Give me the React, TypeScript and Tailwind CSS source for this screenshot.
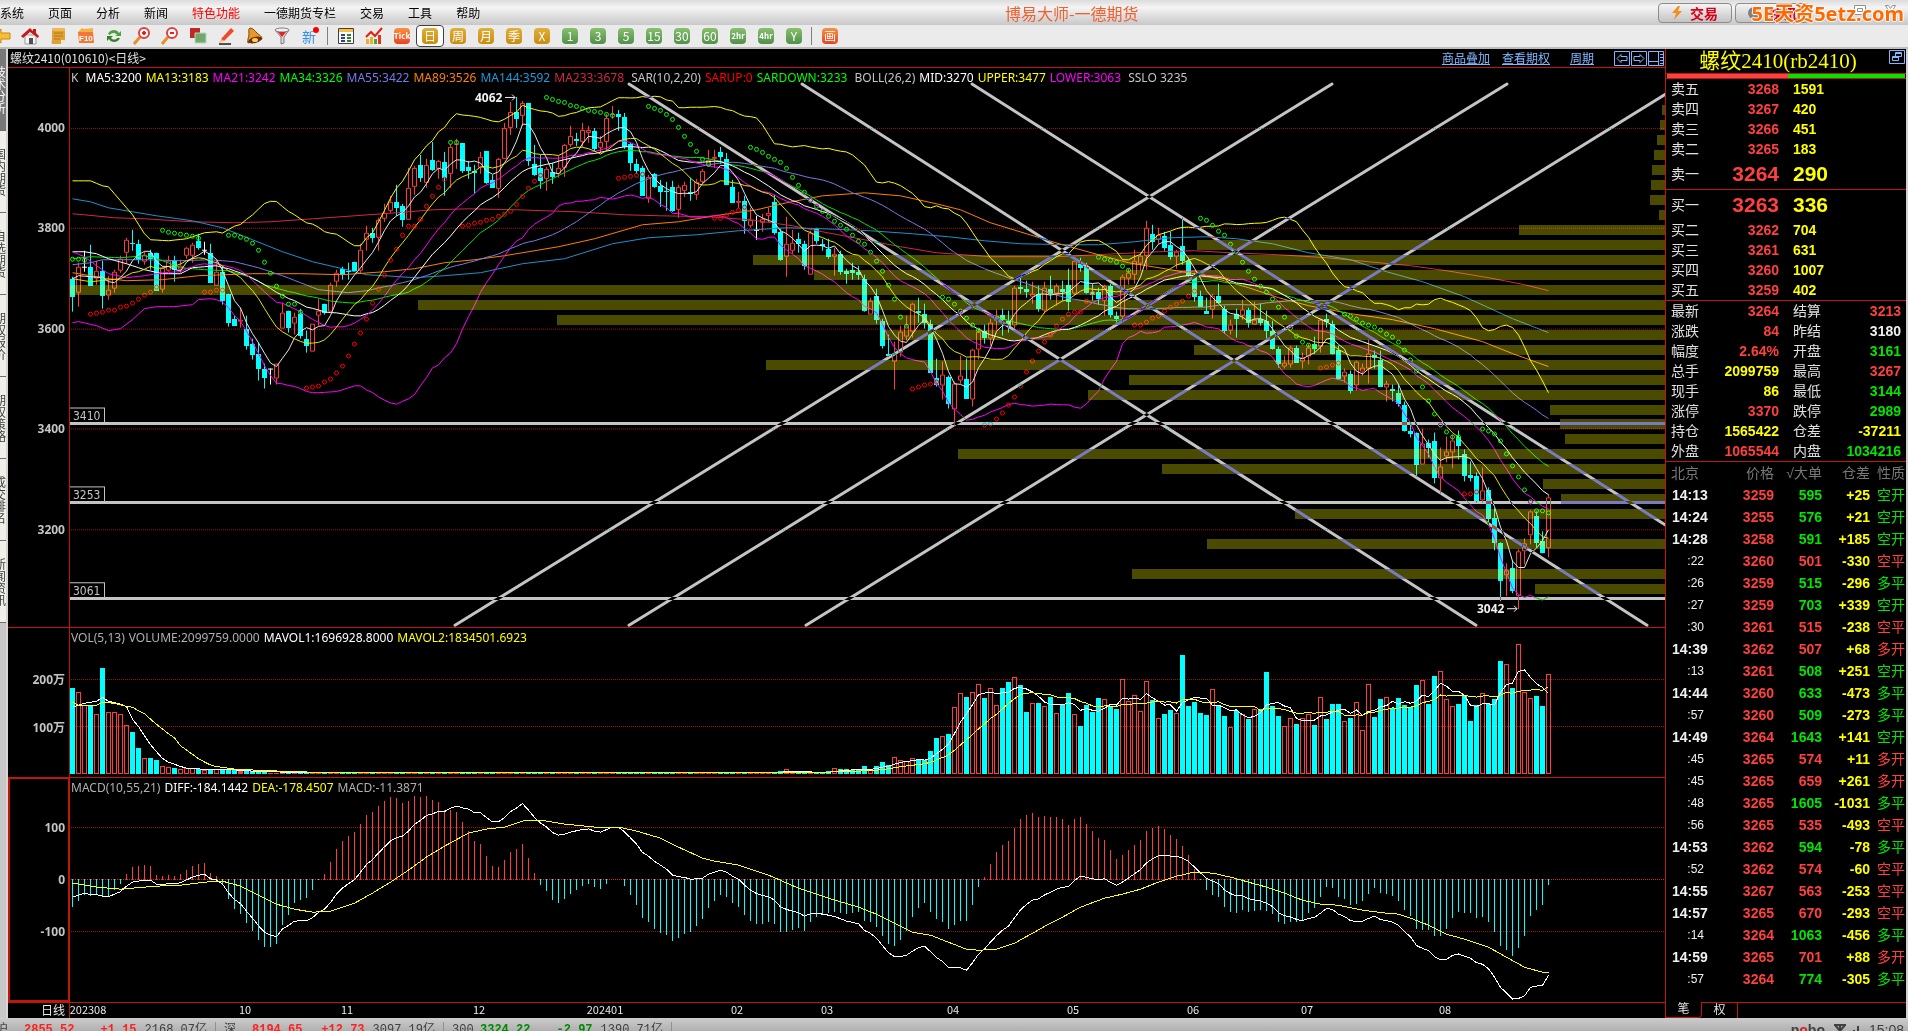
import type { ReactNode } from 'react';

// All series are kept in canvas units: x = 72.5 + 6 * bar, y grows downwards.
const barX = (i: number) => 72.5 + i * 6;

type Point = [number, number];

// open, close, high, low
const CANDLES: number[][] = [
  [279, 297, 277, 312], [293, 267, 263, 307], [267, 267, 251, 272], [267, 286, 245, 286], [279, 271, 261, 285],
  [271, 296, 261, 309], [296, 290, 276, 300], [289, 272, 270, 293], [271, 259, 256, 273], [253, 240, 238, 264],
  [243, 244, 230, 251], [244, 260, 240, 264], [262, 255, 252, 265], [253, 259, 250, 270], [253, 291, 253, 291],
  [290, 268, 267, 293], [271, 261, 256, 272], [261, 270, 256, 282], [270, 266, 260, 273], [256, 248, 247, 259],
  [256, 245, 243, 263], [241, 248, 234, 250], [250, 250, 242, 255], [253, 283, 244, 283], [286, 272, 261, 286],
  [272, 301, 266, 305], [294, 323, 294, 327], [319, 326, 316, 326], [322, 320, 308, 328], [329, 346, 316, 350],
  [344, 355, 339, 360], [354, 369, 343, 381], [369, 378, 364, 389], [369, 369, 369, 385], [379, 364, 364, 385],
  [329, 313, 303, 329], [311, 328, 311, 333], [324, 317, 313, 335], [314, 336, 309, 339], [339, 346, 331, 353],
  [352, 324, 324, 352], [316, 311, 299, 326], [304, 313, 304, 315], [312, 285, 283, 312], [282, 273, 270, 287],
  [269, 275, 267, 280], [271, 272, 263, 280], [262, 271, 262, 272], [271, 250, 244, 274], [240, 233, 226, 251],
  [233, 238, 228, 243], [238, 220, 218, 251], [219, 213, 204, 222], [211, 202, 196, 213], [202, 208, 185, 216],
  [206, 220, 204, 227], [220, 188, 168, 220], [187, 168, 166, 195], [165, 178, 155, 182], [183, 165, 159, 188],
  [160, 170, 142, 171], [169, 161, 160, 179], [162, 178, 152, 196], [174, 147, 144, 188], [145, 144, 139, 169],
  [143, 171, 143, 173], [167, 171, 161, 179], [171, 173, 165, 194], [168, 157, 152, 174], [151, 183, 151, 184],
  [180, 188, 175, 188], [189, 159, 158, 198], [159, 128, 123, 159], [128, 112, 102, 135], [112, 119, 97, 128],
  [116, 103, 101, 126], [103, 161, 103, 166], [164, 175, 145, 176], [168, 181, 155, 189], [179, 169, 167, 191],
  [172, 177, 163, 184], [174, 168, 156, 178], [168, 145, 144, 177], [145, 136, 126, 147], [139, 141, 133, 146],
  [142, 130, 123, 147], [133, 130, 126, 143], [131, 149, 128, 152], [148, 142, 136, 153], [142, 118, 114, 151],
  [115, 114, 106, 119], [114, 117, 110, 131], [117, 147, 113, 149], [144, 163, 143, 171], [164, 171, 159, 174],
  [168, 196, 166, 196], [199, 177, 175, 203], [174, 187, 173, 188], [186, 192, 180, 207], [191, 192, 182, 211],
  [187, 211, 181, 212], [210, 187, 185, 218], [191, 185, 182, 197], [192, 194, 178, 201], [195, 182, 179, 200],
  [182, 171, 169, 184], [166, 160, 150, 167], [159, 157, 150, 168], [152, 157, 147, 164], [159, 185, 153, 185],
  [187, 203, 180, 203], [203, 201, 192, 208], [201, 221, 196, 234], [226, 220, 208, 228], [230, 230, 216, 240],
  [223, 219, 214, 232], [216, 213, 208, 223], [202, 233, 195, 235], [232, 260, 229, 261], [257, 244, 217, 277],
  [251, 243, 230, 254], [239, 244, 233, 253], [244, 266, 241, 270], [275, 233, 231, 275], [229, 241, 228, 244],
  [244, 246, 239, 251], [249, 257, 239, 259], [257, 254, 248, 276], [254, 272, 251, 275], [271, 274, 269, 284],
  [270, 273, 263, 280], [272, 275, 266, 280], [279, 311, 275, 312], [315, 301, 298, 315], [296, 320, 289, 324],
  [321, 346, 319, 349], [354, 356, 335, 357], [362, 354, 342, 390], [353, 332, 326, 357], [337, 326, 316, 341],
  [332, 304, 303, 338], [311, 313, 298, 323], [314, 323, 304, 329], [324, 373, 320, 373], [378, 385, 359, 387],
  [386, 375, 362, 400], [377, 404, 376, 409], [410, 384, 382, 427], [381, 376, 356, 384], [379, 399, 359, 399],
  [400, 350, 349, 407], [350, 332, 329, 360], [331, 338, 325, 344], [339, 323, 319, 346], [321, 316, 310, 330],
  [315, 320, 309, 336], [321, 326, 311, 333], [326, 288, 286, 329], [287, 289, 278, 294], [289, 292, 281, 298],
  [297, 294, 282, 304], [294, 309, 286, 312], [311, 288, 282, 314], [289, 294, 276, 300], [294, 286, 284, 306],
  [289, 292, 281, 301], [285, 302, 269, 311], [294, 261, 260, 296], [264, 268, 258, 272], [267, 293, 263, 294],
  [292, 295, 284, 301], [292, 299, 288, 305], [301, 286, 285, 316], [286, 315, 284, 318], [316, 319, 312, 323],
  [317, 277, 275, 322], [279, 273, 269, 285], [275, 261, 250, 284], [264, 256, 253, 271], [256, 228, 221, 270],
  [234, 242, 225, 250], [240, 235, 228, 244], [236, 248, 232, 251], [245, 257, 232, 260], [257, 252, 250, 269],
  [246, 261, 218, 265], [261, 276, 258, 277], [275, 297, 273, 302], [296, 307, 291, 307], [311, 314, 298, 314],
  [310, 296, 294, 319], [296, 303, 284, 304], [309, 331, 306, 334], [331, 325, 320, 335], [314, 319, 309, 338],
  [316, 310, 300, 320], [310, 323, 308, 328], [325, 320, 302, 325], [319, 323, 304, 326], [321, 331, 311, 339],
  [331, 349, 321, 350], [349, 364, 347, 368], [367, 363, 356, 369], [365, 348, 346, 368], [348, 363, 346, 363],
  [362, 358, 353, 369], [357, 348, 344, 365], [344, 349, 337, 354], [347, 320, 319, 353], [319, 322, 314, 328],
  [324, 354, 321, 355], [350, 379, 346, 380], [377, 372, 369, 383], [374, 391, 371, 394], [386, 362, 361, 391],
  [372, 368, 364, 376], [369, 354, 340, 384], [355, 358, 351, 369], [360, 387, 351, 387], [388, 384, 381, 402],
  [389, 391, 385, 402], [393, 404, 385, 407], [405, 432, 402, 432], [432, 435, 425, 438], [434, 466, 433, 477],
  [465, 444, 429, 465], [444, 449, 440, 458], [442, 479, 433, 484], [479, 467, 448, 494], [457, 452, 437, 463],
  [453, 441, 435, 469], [438, 447, 431, 460], [455, 477, 450, 482], [476, 479, 462, 482], [477, 502, 473, 503],
  [501, 491, 468, 503], [491, 520, 488, 526], [519, 544, 509, 551], [544, 582, 543, 602], [576, 571, 564, 597],
  [569, 592, 561, 594], [597, 552, 550, 610], [552, 544, 539, 565], [536, 512, 511, 545], [517, 544, 512, 548],
  [542, 554, 532, 554], [549, 498, 495, 558],
];

// tops of the first and last volume bars, the ones between are near zero
const VOL_HEAD = [
  689, 693, 706, 707, 715, 669, 713, 713, 715, 726, 733, 749, 759, 759, 761, 767, 768, 769, 770, 769, 769, 770, 771,
  770, 770, 770, 771, 771, 772, 772, 772, 772, 772,
];
const VOL_TAIL = [
  772, 770, 773, 773, 773, 773, 773, 773, 772, 769, 770, 770, 771, 771, 767, 770, 767, 763, 766, 758, 761, 762, 759,
  760, 761, 752, 739, 737, 735, 708, 694, 698, 693, 685, 699, 689, 706, 689, 683, 678, 686, 713, 704, 704, 707, 698,
  714, 705, 694, 715, 727, 706, 713, 699, 700, 707, 710, 680, 702, 696, 712, 682, 701, 719, 715, 711, 714, 656, 707,
  703, 714, 716, 690, 706, 717, 728, 712, 715, 720, 710, 710, 673, 707, 717, 727, 719, 725, 719, 715, 726, 698, 720,
  705, 705, 722, 719, 703, 731, 685, 718, 700, 698, 709, 699, 706, 708, 686, 681, 705, 677, 672, 700, 707, 705, 696,
  722, 706, 694, 705, 700, 662, 665, 689, 645, 693, 699, 697, 707, 675,
];
const VOLUME = [
  ...VOL_HEAD,
  ...Array<number>(CANDLES.length - VOL_HEAD.length - VOL_TAIL.length).fill(773),
  ...VOL_TAIL,
];

const MACD_BARS = [
  -28, -22, -16, -17, -15, -17, -17, -11, -5, 5, 12, 13, 14, 13, 4, 3, 4, 3, 5, 9, 13, 15, 16, 6, 3, -6, -20, -30, -35,
  -44, -52, -61, -68, -68, -65, -46, -36, -24, -21, -19, -11, -1, 5, 17, 30, 38, 43, 47, 55, 64, 67, 73, 78, 82, 81,
  76, 78, 83, 82, 83, 79, 77, 69, 69, 67, 57, 48, 38, 35, 23, 13, 12, 19, 27, 30, 35, 21, 6, -6, -12, -21, -24, -20,
  -15, -11, -7, -5, -8, -10, -5, 0, 0, -7, -16, -26, -39, -43, -50, -54, -56, -62, -59, -55, -53, -47, -40, -29, -22,
  -16, -18, -24, -28, -36, -42, -45, -45, -43, -45, -53, -53, -51, -49, -52, -43, -38, -36, -34, -33, -34, -35, -34,
  -33, -42, -43, -48, -57, -65, -67, -61, -52, -38, -29, -24, -33, -40, -43, -50, -46, -42, -42, -26, -8, 2, 15, 27,
  34, 38, 51, 60, 64, 66, 62, 63, 62, 62, 60, 54, 60, 62, 55, 48, 41, 39, 29, 20, 24, 29, 34, 39, 48, 51, 53, 50, 44,
  40, 33, 24, 10, -1, -11, -16, -18, -28, -33, -34, -31, -33, -32, -31, -32, -35, -43, -45, -43, -43, -41, -34, -29,
  -18, -8, -9, -18, -20, -26, -25, -22, -15, -9, -14, -15, -17, -22, -31, -37, -50, -51, -51, -57, -57, -50, -39, -33,
  -34, -34, -39, -38, -43, -53, -67, -71, -77, -69, -57, -37, -31, -26, -6,
];

const DEA: Point[] = [
  [0, 883], [1, 884], [4, 887], [8, 889], [14, 886], [18, 885], [22, 882], [25, 881], [28, 886], [31, 895], [34, 904],
  [37, 909], [40, 912], [43, 911], [47, 903], [50, 893], [53, 882], [56, 870], [59, 857], [62, 846], [66, 833],
  [69, 829], [72, 827], [75, 821], [78, 820], [82, 824], [87, 827], [91, 827], [94, 831], [98, 838], [101, 847],
  [105, 858], [107, 861], [111, 865], [116, 875], [121, 888], [126, 898], [131, 907], [134, 914], [138, 926],
  [140, 932], [143, 935], [146, 942], [149, 949], [151, 950], [154, 949], [157, 943], [160, 933], [163, 923],
  [165, 917], [168, 907], [172, 898], [175, 894], [178, 889], [181, 882], [184, 876], [187, 872], [190, 873],
  [193, 877], [196, 882], [199, 887], [202, 893], [205, 900], [208, 904], [211, 905], [215, 910], [219, 913],
  [221, 914], [223, 918], [226, 925], [229, 934], [232, 939], [236, 947], [239, 957], [242, 967], [245, 972],
  [246, 972],
];

const MA89: Point[] = [
  [0, 273], [6, 279], [9, 281], [15, 280], [21, 276], [30, 274], [38, 274], [45, 275], [52, 272], [57, 269],
  [62, 263], [67, 260], [72, 256], [81, 247], [87, 239], [95, 225], [101, 222], [107, 216], [114, 210], [119, 203],
  [125, 196], [132, 193], [138, 196], [144, 204], [148, 210], [153, 223], [159, 234], [165, 245], [171, 255],
  [176, 263], [184, 271], [189, 276], [196, 288], [201, 298], [206, 306], [213, 314], [220, 320], [227, 329],
  [235, 342], [240, 354], [246, 367],
];
const MA144: Point[] = [
  [0, 199], [3, 202], [6, 208], [10, 212], [14, 216], [20, 221], [25, 228], [30, 240], [35, 252], [40, 262],
  [45, 269], [49, 275], [52, 276], [57, 278], [62, 276], [68, 273], [75, 264], [82, 259], [90, 244], [96, 238],
  [104, 235], [111, 231], [119, 228], [125, 229], [133, 231], [140, 234], [146, 237], [152, 241], [158, 244],
  [166, 245], [171, 245], [177, 242], [183, 238], [189, 237], [194, 239], [200, 244], [206, 253], [213, 260],
  [219, 272], [225, 282], [232, 297], [240, 319], [246, 333],
];
const MA233: Point[] = [
  [0, 214], [2, 215], [7, 218], [12, 219], [20, 222], [27, 223], [33, 222], [40, 219], [47, 216], [54, 213],
  [60, 210], [66, 209], [74, 210], [84, 212], [92, 215], [98, 216], [106, 217], [113, 220], [120, 226], [125, 232],
  [132, 240], [138, 247], [144, 253], [153, 257], [164, 257], [174, 254], [181, 252], [187, 251], [193, 253],
  [201, 255], [209, 258], [216, 262], [223, 266], [229, 271], [236, 278], [242, 285], [246, 291],
];

// Values before the averaging window is full
const HEADS: Record<string, Point[]> = {
  ma5: [[0, 279], [1, 276], [3, 277]],
  ma13: [[0, 279], [3, 282], [8, 279], [10, 273], [12, 271]],
  ma21: [[0, 252], [2, 257], [4, 266], [6, 274], [9, 278], [12, 276], [15, 273], [18, 272], [20, 266]],
  ma34: [[0, 259], [3, 257], [8, 258], [12, 256], [15, 261], [18, 268], [22, 270], [26, 271], [30, 278], [33, 289]],
  ma55: [
    [0, 265], [3, 263], [5, 260], [12, 260], [18, 261], [23, 260], [27, 262], [31, 268], [35, 276], [38, 283],
    [41, 290], [46, 293], [49, 291], [52, 287], [54, 285],
  ],
  mid: [[0, 252], [2, 252], [4, 254], [6, 259], [9, 264], [12, 270], [15, 274], [18, 274], [20, 268], [24, 266]],
  upper: [
    [0, 181], [3, 181], [5, 186], [6, 187], [8, 201], [10, 215], [12, 234], [13, 240], [16, 241], [19, 239],
    [21, 235], [22, 233], [24, 232],
  ],
  lower: [
    [0, 323], [1, 322], [4, 326], [6, 331], [8, 329], [10, 320], [12, 309], [14, 307], [17, 307], [20, 305],
    [21, 300], [23, 299], [24, 300],
  ],
  vol5: [[0, 708], [1, 706], [2, 704], [3, 703]],
  vol13: [[0, 703], [1, 706], [4, 706], [5, 703], [7, 704], [9, 707], [10, 708], [12, 715]],
};

const SAR: { from: number; up?: boolean; y: number[] }[] = [
  { from: 0, y: [259, 259, 260] },
  { from: 3, up: true, y: [314, 313, 312, 310, 310, 307, 306, 303, 299, 295, 292, 287] },
  { from: 15, y: [230, 232, 233, 234, 235, 236, 238] },
  { from: 22, up: true, y: [292, 292, 290, 290] },
  { from: 26, y: [235, 235, 237, 239, 243, 250, 262, 273, 286, 296, 304, 304, 312] },
  {
    from: 39,
    up: true,
    y: [
      388, 387, 386, 382, 379, 373, 366, 356, 344, 333, 319, 303, 289, 275, 260, 249, 235, 226, 226, 219, 206, 196,
      187, 179,
    ],
  },
  { from: 63, y: [142, 142] },
  { from: 65, up: true, y: [226, 225, 223, 222, 220, 219, 216, 214, 211, 204, 196, 188, 181, 175] },
  { from: 79, y: [97, 99, 101, 102, 105, 106, 108, 110, 111, 112, 114, 115] },
  { from: 91, up: true, y: [178, 177, 176, 175, 174] },
  { from: 96, y: [106, 108, 110, 114, 119, 127, 136, 144, 151, 159, 164] },
  { from: 107, up: true, y: [218, 218, 215, 212, 210, 207] },
  {
    from: 113,
    y: [
      147, 149, 152, 156, 159, 162, 168, 177, 185, 192, 200, 206, 211, 216, 221, 225, 229, 235, 241, 244, 252, 261,
      271, 285, 299, 317, 326,
    ],
  },
  { from: 140, up: true, y: [389, 387, 385, 384, 382] },
  { from: 145, y: [297, 299, 304, 311, 318, 325, 330] },
  {
    from: 152,
    up: true,
    y: [425, 424, 419, 413, 405, 397, 386, 372, 361, 351, 342, 335, 326, 319, 314, 312, 312, 301, 293],
  },
  { from: 171, y: [257, 259, 260, 262, 266, 270] },
  { from: 177, up: true, y: [325, 325, 322, 318, 316, 311, 307, 304, 301, 296, 291] },
  {
    from: 188,
    y: [218, 220, 225, 231, 235, 244, 252, 262, 271, 279, 286, 292, 299, 307, 317, 328, 336, 342, 345, 347],
  },
  { from: 208, up: true, y: [368, 367, 365, 363] },
  {
    from: 212,
    y: [314, 316, 319, 323, 325, 327, 330, 334, 337, 342, 350, 360, 371, 387, 401, 414, 425, 432, 437, 437],
  },
  { from: 232, up: true, y: [494, 494, 492] },
  { from: 235, y: [429, 431, 434, 441, 454, 466, 477, 490, 502, 511, 511, 513] },
];

// left edge of each price-volume bucket, 15 units apart; 0 = empty
const PROFILE = [
  1662, 1660, 1657, 1654, 1652, 1651, 1650, 1659, 1519, 1197, 753, 814, 70, 418, 557, 882, 1194, 766, 1129, 1088,
  1550, 1560, 1565, 958, 1162, 1543, 1561, 1295, 0, 1207, 0, 1132, 1535,
];

const TREND_LINES = [
  [629, 84, 1476, 626],
  [802, 84, 1647, 626],
  [972, 84, 1666, 526],
  [455, 626, 1332, 84],
  [629, 626, 1507, 84],
  [806, 626, 1666, 94],
];

const LEVELS = [
  { y: 424, label: '3410' },
  { y: 503, label: '3253' },
  { y: 599, label: '3061' },
];

function at(points: Point[], i: number) {
  for (let k = 1; k < points.length; k++) {
    const [x0, y0] = points[k - 1];
    const [x1, y1] = points[k];
    if (i <= x1) return y0 + ((y1 - y0) * (i - x0)) / (x1 - x0);
  }
  return points[points.length - 1][1];
}

function average(values: number[], n: number, head: Point[]) {
  return values.map((_, i) => {
    if (i < n - 1) return at(head, i);
    return values.slice(i - n + 1, i + 1).reduce((a, b) => a + b, 0) / n;
  });
}

function band(values: number[], n: number, side: number, head: Point[]) {
  return values.map((_, i) => {
    if (i < n - 1) return at(head, i);
    const win = values.slice(i - n + 1, i + 1);
    const mean = win.reduce((a, b) => a + b, 0) / n;
    const dev = Math.sqrt(win.reduce((a, b) => a + (b - mean) ** 2, 0) / n);
    return mean + side * 2 * dev;
  });
}

const toPoints = (ys: number[]) => ys.map((y, i) => `${barX(i)},${y.toFixed(1)}`).join(' ');
const keyed = (points: Point[]) => points.map(([i, y]) => `${barX(i)},${y}`).join(' ');

const CLOSES = CANDLES.map((c) => c[1]);
const DEA_LINE = CANDLES.map((_, i) => at(DEA, i));
const DIFF_LINE = DEA_LINE.map((y, i) => y - MACD_BARS[i] / 2);

const PRICE_LINES = [
  { color: '#d02848', points: keyed(MA233) },
  { color: '#2090d0', points: keyed(MA144) },
  { color: '#ff8000', points: keyed(MA89) },
  { color: '#7878e8', points: toPoints(average(CLOSES, 55, HEADS.ma55)) },
  { color: '#00e600', points: toPoints(average(CLOSES, 34, HEADS.ma34)) },
  { color: '#ffffff', points: toPoints(average(CLOSES, 26, HEADS.mid)) },
  { color: '#ff00ff', points: toPoints(average(CLOSES, 21, HEADS.ma21)) },
  { color: '#e6e600', points: toPoints(average(CLOSES, 13, HEADS.ma13)) },
  { color: '#ffff00', points: toPoints(band(CLOSES, 26, -1, HEADS.upper)) },
  { color: '#ff00ff', points: toPoints(band(CLOSES, 26, 1, HEADS.lower)) },
  { color: '#e8e8e8', points: toPoints(average(CLOSES, 5, HEADS.ma5)) },
];

function Grid({ rows }: { rows: number[] }) {
  return (
    <>
      {rows.map((y) => (
        <line key={y} x1="71" x2="1665" y1={y} y2={y} stroke="#a01010" strokeDasharray="1 1" />
      ))}
    </>
  );
}

function PriceChart() {
  return (
    <svg
      className="block w-full h-full"
      viewBox="70 68 1595 560"
      preserveAspectRatio="none"
      shapeRendering="crispEdges"
      fill="none"
    >
      <Grid rows={[128.5, 228.5, 329.5, 429.5, 530.5]} />
      {CANDLES.map(([open, close, high, low], i) => {
        const x = barX(i);
        if (open === close) {
          return <path key={i} d={`M${x} ${high}V${low}M${x - 2.5} ${open + 0.5}h5`} stroke="#fff" />;
        }
        if (close > open) {
          return (
            <g key={i}>
              <path d={`M${x} ${high}V${low}`} stroke="#00ffff" />
              <rect x={x - 2.5} y={open} width="5" height={close - open} fill="#00ffff" />
            </g>
          );
        }
        return (
          <path
            key={i}
            d={`M${x} ${high}V${close}M${x} ${open}V${low}M${x - 2} ${close + 0.5}h4V${open - 0.5}h-4z`}
            stroke="#ff3c3c"
          />
        );
      })}
      {PRICE_LINES.map((l, i) => (
        <polyline key={i} points={l.points} stroke={l.color} />
      ))}
      <g shapeRendering="auto">
        {SAR.map((run) =>
          run.y.map((y, k) => (
            <circle
              key={`${run.from}-${k}`}
              cx={barX(run.from + k)}
              cy={y + 0.5}
              r="2"
              stroke={run.up ? '#ff0000' : '#00ff00'}
            />
          )),
        )}
      </g>
      {PROFILE.map((x, k) =>
        x ? <rect key={k} x={x} y={105 + k * 15} width={1665 - x} height="10" fill="#ffff00" opacity="0.29" /> : null,
      )}
      {LEVELS.map((l) => (
        <rect key={l.y} className="mix-blend-difference" x="70" y={l.y - 1} width="1596" height="3" fill="#c4c4c4" />
      ))}
      <g shapeRendering="auto">
        {TREND_LINES.map(([x1, y1, x2, y2], i) => (
          <line
            key={i}
            className="mix-blend-difference"
            x1={x1}
            y1={y1}
            x2={x2}
            y2={y2}
            stroke="#c4c4c4"
            strokeWidth="3"
            strokeLinecap="round"
          />
        ))}
      </g>
      {LEVELS.map((l) => (
        <rect key={l.label} x="69.5" y={l.y - 15.5} width="35" height="15" stroke="#c4c4c4" />
      ))}
      <g fill="#c4c4c4" fontFamily="'DejaVu Sans Condensed', 'Noto Sans', sans-serif" fontSize="12">
        {LEVELS.map((l) => (
          <text key={l.label} x="73" y={l.y - 3}>
            {l.label}
          </text>
        ))}
      </g>
      <g fill="#f0f0f0" fontFamily="'Noto Sans', sans-serif" fontSize="12" fontWeight="700">
        <text x="475" y="102">4062</text>
        <text x="1477" y="614">3042</text>
      </g>
      <path d="M505 97.5h10m-3-3 3 3-3 3M1507 609.5h10m-3-3 3 3-3 3" stroke="#f0f0f0" />
    </svg>
  );
}

function VolumeChart() {
  return (
    <svg
      className="block w-full h-full"
      viewBox="70 629 1595 148"
      preserveAspectRatio="none"
      shapeRendering="crispEdges"
      fill="none"
    >
      <Grid rows={[680.5, 727.5]} />
      {VOLUME.map((y, i) => {
        const x = barX(i);
        const up = CANDLES[i][1] <= CANDLES[i][0];
        if (!up || y > 771) {
          return <rect key={i} x={x - 2.5} y={y} width="5" height={774 - y} fill={up ? '#ff3c3c' : '#00ffff'} />;
        }
        return <rect key={i} x={x - 2} y={y + 0.5} width="4" height={773 - y} stroke="#ff3c3c" />;
      })}
      <polyline points={toPoints(average(VOLUME, 5, HEADS.vol5))} stroke="#ffffff" />
      <polyline points={toPoints(average(VOLUME, 13, HEADS.vol13))} stroke="#ffff00" />
    </svg>
  );
}

function MacdChart() {
  return (
    <svg
      className="block w-full h-full"
      viewBox="70 778 1595 224"
      preserveAspectRatio="none"
      shapeRendering="crispEdges"
      fill="none"
    >
      <Grid rows={[827.5, 931.5]} />
      <line x1="71" x2="1665" y1="879.5" y2="879.5" stroke="#e02020" strokeDasharray="1 1" />
      {MACD_BARS.map((v, i) => (
        <path key={i} d={`M${barX(i)} ${879 - v}V${v > 0 ? 880 : 879}`} stroke={v > 0 ? '#ff3c3c' : '#00ffff'} />
      ))}
      <polyline points={toPoints(DIFF_LINE)} stroke="#ffffff" />
      <polyline points={toPoints(DEA_LINE)} stroke="#ffff00" />
    </svg>
  );
}

interface PaneProps {
  size: string;
  labels: { at: string; text: string }[];
  active?: boolean;
  legend: { text: string; color: string }[];
  children: ReactNode;
}

function Pane({ size, labels, active, legend, children }: PaneProps) {
  return (
    <section className={`flex min-h-0 basis-0 border-b border-[#c01808] ${size}`}>
      <div
        className={
          active ? 'w-[62px] shrink-0 border-2 border-t-1 border-[#c01808]' : 'w-[62px] shrink-0 border-r border-[#c01808]'
        }
      >
        <svg className="block w-full h-full overflow-visible">
          {labels.map((l) => (
            <text
              key={l.text}
              x={active ? 55 : 57}
              y={l.at}
              dy="4"
              textAnchor="end"
              className="fill-[#c4c4c4] font-bold text-xs font-[Noto_Sans,Noto_Sans_CJK_SC,sans-serif]"
            >
              {l.text}
            </text>
          ))}
        </svg>
      </div>
      <div className="relative flex-1 min-w-0">
        {children}
        <div className="absolute left-px top-0.5 flex gap-1 text-xs leading-4 whitespace-pre font-[Noto_Sans,sans-serif]">
          {legend.map((l) => (
            <span key={l.text} className={l.color}>
              {l.text}
            </span>
          ))}
        </div>
      </div>
    </section>
  );
}

const PRICE_LEGEND = [
  { text: 'K ', color: 'text-[#c4c4c4]' },
  { text: 'MA5:3200', color: 'text-white' },
  { text: 'MA13:3183', color: 'text-[#ffff00]' },
  { text: 'MA21:3242', color: 'text-[#ff00ff]' },
  { text: 'MA34:3326', color: 'text-[#00ff00]' },
  { text: 'MA55:3422', color: 'text-[#7878e8]' },
  { text: 'MA89:3526', color: 'text-[#ff8000]' },
  { text: 'MA144:3592', color: 'text-[#2098d8]' },
  { text: 'MA233:3678', color: 'text-[#d02848]' },
  { text: ' SAR(10,2,20)', color: 'text-[#c4c4c4]' },
  { text: 'SARUP:0', color: 'text-[#ff0000]' },
  { text: 'SARDOWN:3233', color: 'text-[#00ff00]' },
  { text: ' BOLL(26,2)', color: 'text-[#c4c4c4]' },
  { text: 'MID:3270', color: 'text-white' },
  { text: 'UPPER:3477', color: 'text-[#ffff00]' },
  { text: 'LOWER:3063', color: 'text-[#ff00ff]' },
  { text: ' SSLO 3235', color: 'text-[#c4c4c4]' },
];

const VOLUME_LEGEND = [
  { text: 'VOL(5,13)', color: 'text-[#b0b0b0]' },
  { text: 'VOLUME:2099759.0000', color: 'text-[#b0b0b0]' },
  { text: 'MAVOL1:1696928.8000', color: 'text-white' },
  { text: 'MAVOL2:1834501.6923', color: 'text-[#ffff00]' },
];

const MACD_LEGEND = [
  { text: 'MACD(10,55,21)', color: 'text-[#b0b0b0]' },
  { text: 'DIFF:-184.1442', color: 'text-white' },
  { text: 'DEA:-178.4507', color: 'text-[#ffff00]' },
  { text: 'MACD:-11.3871', color: 'text-[#b0b0b0]' },
];

const MONTHS = [
  { x: 88, text: '202308' },
  { x: 245, text: '10' },
  { x: 347, text: '11' },
  { x: 479, text: '12' },
  { x: 605, text: '202401' },
  { x: 737, text: '02' },
  { x: 827, text: '03' },
  { x: 953, text: '04' },
  { x: 1073, text: '05' },
  { x: 1193, text: '06' },
  { x: 1307, text: '07' },
  { x: 1445, text: '08' },
];

const MENU = ['系统', '页面', '分析', '新闻', '特色功能', '一德期货专栏', '交易', '工具', '帮助'];

function TitleBar() {
  return (
    <header className="relative flex items-center h-[25px] shrink-0 bg-linear-to-b from-[#dcdcdc] via-[#f4f4f4] via-30% to-[#c8c8c8]">
      <nav className="flex gap-6 text-xs text-black">
        {MENU.map((m) => (
          <button key={m} className={m === '特色功能' ? 'text-[#ff0000]' : ''}>
            {m}
          </button>
        ))}
      </nav>
      <h1 className="absolute left-1/2 ml-[51px] text-base leading-6 text-[#f06030]">博易大师-一德期货</h1>
      <div className="ml-auto flex items-center gap-[3px] pr-1">
        <button className="flex h-5 w-[74px] items-center justify-center gap-2 rounded-sm border border-[#8c8c8c] bg-linear-to-b from-[#f4f4f4] to-[#c4c4c4] text-sm font-bold text-[#d80018]">
          <svg width="10" height="14" viewBox="0 0 10 14">
            <path d="M6 0 0 7h4L2 14l8-9H6l2-5z" fill="#f09020" />
          </svg>
          交易
        </button>
        <button className="flex h-5 w-[74px] items-center justify-center gap-2 rounded-sm border border-[#8c8c8c] bg-linear-to-b from-[#f4f4f4] to-[#c4c4c4] text-sm font-bold text-[#d80018]">
          <svg width="14" height="14" viewBox="0 0 14 14">
            <circle cx="7" cy="7" r="6" fill="#808080" />
          </svg>
          快讯
        </button>
        <svg width="92" height="20" viewBox="0 0 92 20" fill="none" stroke="#909090">
          <path d="M16.500 8.500h12v3h-12zM42.500 2.500h11v9h-11zM45.500 5.500h5v3h-5z" fill="#fff" />
          <path d="M73.500 2.500h3l2 3 2-3h3l-3 5 3 5h-3l-2-3-2 3h-3l3-5z" fill="#fff" />
        </svg>
      </div>
      <span className="absolute right-1 top-0 z-10 text-xl leading-7 font-bold text-[#ff6a00] font-[Noto_Sans,Noto_Sans_CJK_SC,sans-serif] [text-shadow:1px_0_#fff,-1px_0_#fff,0_1px_#fff,0_-1px_#fff]">
        5E天资5etz.com
      </span>
    </header>
  );
}

const ICONS: { name: string; art: ReactNode }[] = [
  {
    name: '后退',
    art: <path d="M0 9 8 2v4h9v6H8v4z" fill="#f8c030" stroke="#c88810" />,
  },
  {
    name: '首页',
    art: (
      <>
        <path d="M4 8h11v9H4z" fill="#f4f4f4" stroke="#999" />
        <path d="M9 1 0 9l2 2 7-6 8 6 1-2-3-3V2h-3v2z" fill="#c81818" />
        <path d="M8 11h4v6H8z" fill="#505050" />
      </>
    ),
  },
  {
    name: '笔记',
    art: (
      <>
        <path d="M3 1h13v12l-4 4H3c-1-2 0-3 0-5z" fill="#e0a038" />
        <path d="M3 1h13v3H3z" fill="#f0b850" />
        <path d="M5 6h9M5 9h9M5 12h6" stroke="#b87810" />
        <path d="M12 17v-4h4z" fill="#fff0c0" />
      </>
    ),
  },
  {
    name: 'F10',
    art: (
      <>
        <path d="M1 5h15l1 11H2z" fill="#f07838" />
        <path d="m1 5 4-4 2 1 9-1v4z" fill="#f8b040" />
        <text x="2" y="14" fontSize="8" fontWeight="700" fill="#fff" fontFamily="Liberation Sans, sans-serif">
          F10
        </text>
      </>
    ),
  },
  {
    name: '刷新',
    art: (
      <>
        <path d="M3 7c2-5 9-5 11-1l2-2v5h-6l2-1c-2-3-6-2-7 0z" fill="#50a040" />
        <path d="M15 11c-2 5-9 5-11 1l-2 2V9h6l-2 2c2 2 5 2 6 0z" fill="#388030" />
      </>
    ),
  },
  {
    name: '放大',
    art: (
      <>
        <path d="m7 10-6 7" stroke="#e89030" strokeWidth="3" />
        <circle cx="11" cy="6" r="5" fill="#fff" stroke="#e04040" strokeWidth="2" />
        <path d="M9 6h4M11 4v4" stroke="#e82020" strokeWidth="2" />
      </>
    ),
  },
  {
    name: '缩小',
    art: (
      <>
        <path d="m7 10-6 7" stroke="#e89030" strokeWidth="3" />
        <circle cx="11" cy="6" r="5" fill="#fff" stroke="#e04040" strokeWidth="2" />
        <path d="M9 6h4" stroke="#e82020" strokeWidth="2" />
      </>
    ),
  },
  {
    name: '叠加',
    art: (
      <>
        <path d="M1 1h10v10H1z" fill="#c02828" />
        <path d="M6 6h11v10H6z" fill="#70a870" stroke="#b8d8b8" />
      </>
    ),
  },
  {
    name: '画线',
    art: (
      <>
        <path d="M4 12 14 1l3 3L7 14z" fill="#f04828" />
        <path d="m4 12 3 2-5 2z" fill="#f0c080" />
        <path d="M2 17h12" stroke="#505050" strokeWidth="2" />
      </>
    ),
  },
  {
    name: '预警',
    art: (
      <>
        <path d="M5 1c3 0 5 3 7 5s5 3 5 6l-14 4c-1-3 1-6 1-9S3 2 5 1z" fill="#e89828" stroke="#804808" />
        <ellipse cx="10" cy="13" rx="7" ry="3" fill="#703008" transform="rotate(-14 10 13)" />
        <ellipse cx="10" cy="13" rx="3" ry="2" fill="#f8d060" />
      </>
    ),
  },
  {
    name: '筛选',
    art: (
      <>
        <path d="M2 3h14l-5 7v6l-3 1v-7z" fill="#d8d8d8" stroke="#808080" />
        <ellipse cx="9" cy="3" rx="7" ry="2" fill="#f0f0f0" stroke="#808080" />
        <path d="M5 5h8l-4 5z" fill="#e82020" />
      </>
    ),
  },
  {
    name: '新',
    art: (
      <>
        <text x="1" y="15" fontSize="14" fill="#3890e8" fontFamily="Noto Sans CJK SC, sans-serif">
          新
        </text>
        <circle cx="15" cy="3" r="3" fill="#ff0000" />
      </>
    ),
  },
];

const VIEW_ICONS: { name: string; art: ReactNode }[] = [
  {
    name: '报价',
    art: (
      <>
        <path d="M1.500 1.500h15v15h-15z" fill="#fff" stroke="#404040" />
        <path d="M2 2h14v3H2z" fill="#f8c040" />
        <path d="M4 8h4M4 11h4M4 14h4" stroke="#304090" strokeWidth="2" />
        <path d="M10 8h4M10 11h4M10 14h4" stroke="#308030" strokeWidth="2" />
      </>
    ),
  },
  {
    name: '走势',
    art: (
      <>
        <path d="M1 12h3v5H1zM5 10h3v7H5z" fill="#e8b030" />
        <path d="M9 12h3v5H9z" fill="#50a040" />
        <path d="M13 8h3v9h-3z" fill="#e83020" />
        <path d="m1 10 5-5 4 4 7-8" stroke="#e02010" strokeWidth="2" fill="none" />
      </>
    ),
  },
];

function ToolIcon({ name, art }: { name: string; art: ReactNode }) {
  return (
    <button aria-label={name} className="flex h-full w-7 shrink-0 items-center justify-center">
      <svg width="18" height="18" viewBox="0 0 18 18" fill="none">
        {art}
      </svg>
    </button>
  );
}

const GOLD = 'bg-linear-to-b from-[#e0b038] to-[#c88c08]';
const GREEN = 'bg-linear-to-b from-[#88c070] to-[#509048]';
const RED = 'bg-linear-to-b from-[#f89040] to-[#e84020]';

const PERIODS = [
  { text: 'Tick', tint: RED, small: true },
  { text: '日', tint: GOLD, active: true },
  { text: '周', tint: GOLD },
  { text: '月', tint: GOLD },
  { text: '季', tint: GOLD },
  { text: 'X', tint: GOLD },
  { text: '1', tint: GREEN },
  { text: '3', tint: GREEN },
  { text: '5', tint: GREEN },
  { text: '15', tint: GREEN },
  { text: '30', tint: GREEN },
  { text: '60', tint: GREEN },
  { text: '2hr', tint: GREEN, small: true },
  { text: '4hr', tint: GREEN, small: true },
  { text: 'Y', tint: GREEN },
];

function PeriodButton({ text, tint, small, active }: { text: string; tint: string; small?: boolean; active?: boolean }) {
  return (
    <button
      className={`flex h-[22px] w-7 shrink-0 items-center justify-center ${active ? 'rounded border border-[#404040] bg-white' : ''}`}
    >
      <span
        className={`flex h-4 w-4 items-center justify-center rounded-sm text-white ${small ? 'text-[8px] font-bold' : 'text-xs'} ${tint}`}
      >
        {text}
      </span>
    </button>
  );
}

function Toolbar() {
  return (
    <div className="flex items-center h-6 shrink-0 overflow-hidden border-b-2 border-[#c0bcbc] bg-[#ebebeb]">
      <div className="-ml-3 flex h-full items-center">
        {ICONS.map((i) => (
          <ToolIcon key={i.name} {...i} />
        ))}
        <span className="mr-1 ml-[3px] h-[18px] w-px bg-[#808080]" />
        {VIEW_ICONS.map((i) => (
          <ToolIcon key={i.name} {...i} />
        ))}
        {PERIODS.map((p) => (
          <PeriodButton key={p.text} {...p} />
        ))}
        <span className="mr-1 ml-[3px] h-[18px] w-px bg-[#808080]" />
        <PeriodButton text="画" tint={RED} />
      </div>
    </div>
  );
}

const SIDE_TABS = ['技术分析', '国内期货', '自选期货', '期权报价', '期权策略', '成交排名', '新闻资讯'];

function SideTabs() {
  return (
    <div className="w-2 shrink-0 overflow-hidden border-r-2 border-[#d8d4d4] bg-[#c8c8c8]">
      {SIDE_TABS.map((t, i) => (
        <button
          key={t}
          className={`flex h-[82px] w-1.5 items-center justify-end overflow-hidden border-b border-[#707070] text-xs leading-3 ${i === 0 ? 'bg-[#787878] text-white' : 'bg-[#f0f0e8] text-[#404040]'}`}
        >
          <span className="w-3 shrink-0 break-all">{t}</span>
        </button>
      ))}
    </div>
  );
}

function ChartTitle() {
  return (
    <div className="flex items-center h-[19px] shrink-0 border-b border-[#c01808] pl-0.5 text-xs text-[#e0e0e0]">
      <span>螺纹2410(010610)&lt;日线&gt;</span>
      <div className="ml-auto flex items-center text-[#80b8ff] underline">
        <a href="#overlay" className="mr-3">商品叠加</a>
        <a href="#options" className="mr-5">查看期权</a>
        <a href="#period" className="mr-5">周期</a>
        <svg width="51" height="15" viewBox="0 0 51 15" fill="none" stroke="#80b8ff">
          <path d="M.5.5h15v14H.5zM17.500.5h15v14h-15zM34.500.5h15v14h-15z" />
          <path d="m3 7.500 4-4v2h6v4H7v2zM30 7.500l-4-4v2h-6v4h6v2z" />
          <path d="M44.500 1v13M35 10.500h9M46 3.500h3M46 6.500h3M46 9.500h3M46 12.500h3" />
        </svg>
      </div>
    </div>
  );
}

const ASKS = [
  ['卖五', '3268', '1591'],
  ['卖四', '3267', '420'],
  ['卖三', '3266', '451'],
  ['卖二', '3265', '183'],
  ['卖一', '3264', '290'],
];
const BIDS = [
  ['买一', '3263', '336'],
  ['买二', '3262', '704'],
  ['买三', '3261', '631'],
  ['买四', '3260', '1007'],
  ['买五', '3259', '402'],
];

const R = 'text-[#ff4040]';
const G = 'text-[#00e600]';
const Y = 'text-[#ffff00]';
const W = 'text-[#f0f0f0]';

const STATS = [
  ['最新', '3264', R, '结算', '3213', R],
  ['涨跌', '84', R, '昨结', '3180', W],
  ['幅度', '2.64%', R, '开盘', '3161', G],
  ['总手', '2099759', Y, '最高', '3267', R],
  ['现手', '86', Y, '最低', '3144', G],
  ['涨停', '3370', R, '跌停', '2989', G],
  ['持仓', '1565422', Y, '仓差', '-37211', Y],
  ['外盘', '1065544', R, '内盘', '1034216', G],
];

const TICKS = [
  ['14:13', '3259', '595', '+25', '空开', G],
  ['14:24', '3255', '576', '+21', '空开', G],
  ['14:28', '3258', '591', '+185', '空开', G],
  [':22', '3260', '501', '-330', '空平', R],
  [':26', '3259', '515', '-296', '多平', G],
  [':27', '3259', '703', '+339', '空开', G],
  [':30', '3261', '515', '-238', '空平', R],
  ['14:39', '3262', '507', '+68', '多开', R],
  [':13', '3261', '508', '+251', '空开', G],
  ['14:44', '3260', '633', '-473', '多平', G],
  [':57', '3260', '509', '-273', '多平', G],
  ['14:49', '3264', '1643', '+141', '空开', G],
  [':45', '3265', '574', '+11', '多开', R],
  [':45', '3265', '659', '+261', '多开', R],
  [':48', '3265', '1605', '-1031', '多平', G],
  [':56', '3265', '535', '-493', '空平', R],
  ['14:53', '3262', '594', '-78', '多平', G],
  [':52', '3262', '574', '-60', '空平', R],
  ['14:55', '3267', '563', '-253', '空平', R],
  ['14:57', '3265', '670', '-293', '空平', R],
  [':14', '3264', '1063', '-456', '多平', G],
  ['14:59', '3265', '701', '+88', '多开', R],
  [':57', '3264', '774', '-305', '多平', G],
];

function OrderBook({ rows }: { rows: string[][] }) {
  return (
    <table className="w-full table-fixed border-b border-[#c01808] text-sm">
      <colgroup>
        <col className="w-[46px]" />
        <col className="w-[67px]" />
        <col />
      </colgroup>
      <tbody>
        {rows.map(([name, price, qty]) => {
          const best = name.endsWith('一');
          return (
            <tr key={name} className={best ? 'h-[30px]' : 'h-5'}>
              <th scope="row" className="p-0 pl-[5px] text-left font-normal leading-5 text-[#e0e0e0]">
                {name}
              </th>
              <td className={`p-0 text-right font-bold leading-5 ${R} ${best ? 'text-[21px]' : ''}`}>{price}</td>
              <td className={`p-0 pl-3.5 font-bold leading-5 ${Y} ${best ? 'text-[21px]' : ''}`}>{qty}</td>
            </tr>
          );
        })}
      </tbody>
    </table>
  );
}

function QuotePanel() {
  return (
    <aside className="flex w-[243px] shrink-0 flex-col border-l border-r-2 border-l-[#c01808] border-r-[#d0d0d0] font-[Liberation_Sans,Noto_Sans_CJK_SC,sans-serif]">
      <div className="relative h-6 shrink-0 text-center">
        <h2 className="pr-12 pl-8 whitespace-nowrap text-[21px] leading-6 text-[#ffff00] font-[Liberation_Serif,Noto_Sans_CJK_SC,serif]">
          螺纹2410(rb2410)
        </h2>
        <button aria-label="切换" className="absolute right-px top-px">
          <svg width="16" height="14" viewBox="0 0 16 14" fill="none" stroke="#80b8ff">
            <path d="M.5.5h15v13H.5zM6.500 2.500h6v4h-6zM3.500 6.500h6v4h-6zM6 3.500h7M3 7.500h7" />
          </svg>
        </button>
      </div>
      <div className="flex h-1.5 shrink-0 border-y border-[#c01808] px-px">
        <div className="w-[51%] bg-[#ff4040]" />
        <div className="flex-1 bg-[#00e600]" />
      </div>
      <OrderBook rows={ASKS} />
      <OrderBook rows={BIDS} />
      <table className="w-full table-fixed border-b border-[#c01808] text-sm">
        <colgroup>
          <col className="w-[38px]" />
          <col className="w-[75px]" />
          <col className="w-[48px]" />
          <col />
        </colgroup>
        <tbody>
          {STATS.map(([a, av, ac, b, bv, bc]) => (
            <tr key={a} className="h-5">
              <th scope="row" className="p-0 pl-[5px] text-left font-normal leading-5 text-[#e0e0e0]">
                {a}
              </th>
              <td className={`p-0 text-right font-bold leading-5 ${ac}`}>{av}</td>
              <th scope="row" className="p-0 pl-3.5 text-left font-normal leading-5 text-[#e0e0e0]">
                {b}
              </th>
              <td className={`p-0 pr-[5px] text-right font-bold leading-5 ${bc}`}>{bv}</td>
            </tr>
          ))}
        </tbody>
      </table>
      <div className="min-h-0 flex-1 overflow-hidden">
        <table className="w-full table-fixed text-sm">
          <colgroup>
            <col className="w-[44px]" />
            <col className="w-[64px]" />
            <col className="w-[48px]" />
            <col className="w-[48px]" />
            <col />
          </colgroup>
          <thead>
            <tr className="h-[22px] text-[#787878]">
              <th className="p-0 pl-[5px] text-left font-normal leading-5">北京</th>
              <th className="p-0 text-right font-normal leading-5">价格</th>
              <th className="p-0 text-right font-normal leading-5 whitespace-nowrap">√大单</th>
              <th className="p-0 text-right font-normal leading-5">仓差</th>
              <th className="p-0 pr-px text-right font-normal leading-5">性质</th>
            </tr>
          </thead>
          <tbody>
            {TICKS.map(([time, price, qty, diff, kind, tone], i) => (
              <tr key={i} className="h-[22px]">
                <td
                  className={`p-0 text-[#f0f0f0] leading-5 ${time.startsWith(':') ? 'pr-1.5 text-right text-xs' : 'pl-1.5 font-bold'}`}
                >
                  {time}
                </td>
                <td className={`p-0 text-right font-bold leading-5 ${R}`}>{price}</td>
                <td className={`p-0 text-right font-bold leading-5 ${tone}`}>{qty}</td>
                <td className={`p-0 text-right font-bold leading-5 ${Y}`}>{diff}</td>
                <td className={`p-0 pr-px text-right leading-5 ${tone}`}>{kind}</td>
              </tr>
            ))}
          </tbody>
        </table>
      </div>
      <div className="flex h-4 shrink-0 text-xs leading-[15px] text-[#e0e0e0]">
        <button className="w-9 rounded-br-sm border-r border-b border-[#c01808]">笔</button>
        <button className="w-9 border-t border-r border-[#c01808]">权</button>
        <span className="flex-1 border-t border-[#c01808]" />
      </div>
    </aside>
  );
}

const INDICES = [
  { name: '沪', last: '2855.52', change: '+1.15', amount: '2168.07亿', color: 'text-[#ff2020]', first: true },
  { name: '深', last: '8194.65', change: '+12.73', amount: '3097.19亿', color: 'text-[#ff2020]' },
  { name: '300', last: '3324.22', change: '-2.97', amount: '1390.71亿', color: 'text-[#008a00]' },
];

function StatusBar() {
  return (
    <footer className="flex h-[13px] shrink-0 items-start overflow-hidden bg-linear-to-b from-[#cccccc] to-[#b0b0b0] pt-1 text-xs leading-4 text-[#404040] font-[Liberation_Mono,Noto_Sans_CJK_SC,monospace]">
      {INDICES.map((x) => (
        <div key={x.name} className={`flex border-r border-[#909090] pr-2 ${x.first ? 'w-[216px]' : 'w-[228px] pl-2'}`}>
          <span className={x.first ? '-ml-1 w-7' : 'w-7'}>{x.name}</span>
          <b className={x.color}>{x.last}</b>
          <b className={`flex-1 text-right ${x.color}`}>{x.change}</b>
          <span className="ml-2">{x.amount}</span>
        </div>
      ))}
      <b className="ml-auto text-sm leading-4 text-[#404040] font-[Liberation_Sans,sans-serif]">
        p<span className="text-[#e02020]">o</span>bo
      </b>
      <svg className="mx-2 mt-0.5" width="28" height="14" viewBox="0 0 28 14" fill="none" stroke="#404040" strokeWidth="2">
        <path d="M1 1h12M2 1l5 6 5-6M7 1v12M17 13V9M21 13V6M25 13V2" />
      </svg>
      <span className="mr-1 text-sm leading-4 font-[Liberation_Sans,sans-serif]">15:08</span>
    </footer>
  );
}

export default function App() {
  return (
    <div className="flex h-screen flex-col overflow-hidden bg-black font-[Noto_Sans_CJK_SC,sans-serif]">
      <TitleBar />
      <Toolbar />
      <main className="flex min-h-0 flex-1">
        <SideTabs />
        <div className="flex min-w-0 flex-1 flex-col">
          <ChartTitle />
          <Pane
            size="grow-[561]"
            legend={PRICE_LEGEND}
            labels={[
              { at: '10.8%', text: '4000' },
              { at: '28.7%', text: '3800' },
              { at: '46.7%', text: '3600' },
              { at: '64.6%', text: '3400' },
              { at: '82.6%', text: '3200' },
            ]}
          >
            <PriceChart />
          </Pane>
          <Pane
            size="grow-[149]"
            legend={VOLUME_LEGEND}
            labels={[
              { at: '35%', text: '200万' },
              { at: '67%', text: '100万' },
            ]}
          >
            <VolumeChart />
          </Pane>
          <Pane
            size="grow-[225]"
            active
            legend={MACD_LEGEND}
            labels={[
              { at: '22%', text: '100' },
              { at: '45.5%', text: '0' },
              { at: '69%', text: '-100' },
            ]}
          >
            <MacdChart />
          </Pane>
          <div className="flex h-[15px] shrink-0 text-[11px] leading-[14px] text-[#e8e8e8]">
            <span className="w-[62px] border-r border-[#c01808] pr-1 text-right text-xs leading-[14px]">日线</span>
            <svg className="h-full flex-1">
              {MONTHS.map((m) => (
                <text
                  key={m.text}
                  x={`${((m.x - 70) / 1595) * 100}%`}
                  y="11"
                  textAnchor="middle"
                  fill="currentColor"
                >
                  {m.text}
                </text>
              ))}
            </svg>
          </div>
        </div>
        <QuotePanel />
      </main>
      <StatusBar />
    </div>
  );
}
